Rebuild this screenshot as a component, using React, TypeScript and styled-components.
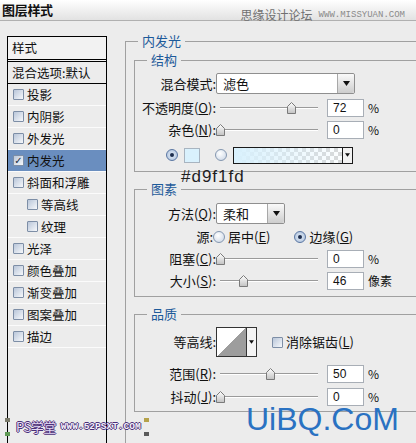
import React from 'react';
import styled, { createGlobalStyle } from 'styled-components';

const GlobalStyle = createGlobalStyle`
  html, body {
    margin: 0;
    padding: 0;
  }
  body {
    background: #ececec;
    font-family: "Noto Sans CJK SC", "Liberation Sans", sans-serif;
    font-size: 13px;
    color: #111;
    overflow: hidden;
  }
`;

const effects = [
  { name: '投影' },
  { name: '内阴影' },
  { name: '外发光' },
  { name: '内发光', checked: true },
  { name: '斜面和浮雕' },
  { name: '等高线', sub: true },
  { name: '纹理', sub: true },
  { name: '光泽' },
  { name: '颜色叠加' },
  { name: '渐变叠加' },
  { name: '图案叠加' },
  { name: '描边' },
];

const Thumb = () => (
  <svg width="9" height="12" viewBox="0 0 9 12">
    <defs>
      <linearGradient id="thumbFill" x1="0" x2="0" y1="0" y2="1">
        <stop offset="0" stopColor="#ffffff" />
        <stop offset="1" stopColor="#c2c2c2" />
      </linearGradient>
    </defs>
    <path
      d="M0.5 4.5 L4.5 0.5 L8.5 4.5 V11.5 H0.5 Z"
      fill="url(#thumbFill)"
      stroke="#7a7a7a"
    />
  </svg>
);

const Arrow = ({ w = 7 }: { w?: number }) => (
  <svg width={w} height={Math.ceil(w / 2) + 1} viewBox="0 0 7 5">
    <path d="M0 0 H7 L3.5 5 Z" fill="#111" />
  </svg>
);

const Slider = ({ pos }: { pos: number }) => (
  <Track>
    <ThumbSpot $pos={pos}>
      <Thumb />
    </ThumbSpot>
  </Track>
);

// label + slider + number box + unit, used inside a Row
const SliderParts = (props: {
  label: React.ReactNode;
  pos: number;
  value: string;
  unit?: string;
}) => (
  <>
    <Label>{props.label}</Label>
    <Slider pos={props.pos} />
    <NumBox>{props.value}</NumBox>
    <Unit>{props.unit ?? '%'}</Unit>
  </>
);

export default function App() {
  return (
    <Dialog>
      <GlobalStyle />
      <TitleBar>
        <Title>图层样式</Title>
        <SiteMark>
          思缘设计论坛<SiteUrl>WWW.MISSYUAN.COM</SiteUrl>
        </SiteMark>
      </TitleBar>

      <Body>
        <StylePanel>
          <PanelHead>样式</PanelHead>
          <BlendRow>混合选项:默认</BlendRow>
          {effects.map((e) => (
            <EffectRow key={e.name} $sub={e.sub} $active={e.checked}>
              <Check>{e.checked ? '✓' : ''}</Check>
              {e.name}
            </EffectRow>
          ))}
        </StylePanel>

        <Outer>
          <Legend $offset={4}>内发光</Legend>

          <Group $pt={5} $pb={5}>
            <Legend $offset={12}>结构</Legend>
            <Row $h={21}>
              <Label>混合模式:</Label>
              <Select $w={139}>
                <span>滤色</span>
                <DropBtn>
                  <Arrow />
                </DropBtn>
              </Select>
            </Row>
            <Row $mt={3}>
              <SliderParts label={<>不透明度(<u>O</u>):</>} pos={72} value="72" />
            </Row>
            <Row>
              <SliderParts label={<>杂色(<u>N</u>):</>} pos={0} value="0" />
            </Row>
            <Row $mt={3}>
              <ColorPick>
                <Radio $on />
                <Swatch />
                <Radio />
                <GradientBox>
                  <GradientDrop>
                    <Arrow w={5} />
                  </GradientDrop>
                </GradientBox>
              </ColorPick>
            </Row>
          </Group>

          <Group $pt={6} $pb={4}>
            <Legend $offset={12}>图素</Legend>
            <Row $h={21}>
              <Label>方法(<u>Q</u>):</Label>
              <Select $w={69}>
                <span>柔和</span>
                <DropBtn>
                  <Arrow />
                </DropBtn>
              </Select>
            </Row>
            <Row $mt={2}>
              <Label $w={78}>源:</Label>
              <Choice>
                <Radio />
                <span>居中(<u>E</u>)</span>
              </Choice>
              <Choice $gap={24}>
                <Radio $on />
                <span>边缘(<u>G</u>)</span>
              </Choice>
            </Row>
            <Row>
              <SliderParts label={<>阻塞(<u>C</u>):</>} pos={0} value="0" />
            </Row>
            <Row>
              <SliderParts label={<>大小(<u>S</u>):</>} pos={23} value="46" unit="像素" />
            </Row>
          </Group>

          <Group $pt={5} $pb={3}>
            <Legend $offset={12}>品质</Legend>
            <Row $h={30}>
              <Label>等高线:</Label>
              <ContourBox />
              <ContourDrop>
                <Arrow w={5} />
              </ContourDrop>
              <Choice $gap={15}>
                <Check>{''}</Check>
                <span>消除锯齿(<u>L</u>)</span>
              </Choice>
            </Row>
            <Row $mt={6}>
              <SliderParts label={<>范围(<u>R</u>):</>} pos={51} value="50" />
            </Row>
            <Row $mt={1}>
              <SliderParts label={<>抖动(<u>J</u>):</>} pos={0} value="0" />
            </Row>
          </Group>
        </Outer>
      </Body>

      <HexNote>#d9f1fd</HexNote>
      <PsMark>
        <Corner />
        <PsName>PS学堂</PsName>
        <PsUrl>WWW.52PSXT.COM</PsUrl>
        <Corner $flip />
      </PsMark>
      <Brand>UiBQ.CoM</Brand>
    </Dialog>
  );
}

const Dialog = styled.div`
  position: relative;
  width: 416px;
  height: 443px;
  overflow: hidden;
`;

const TitleBar = styled.div`
  height: 20px;
  border-bottom: 1px solid #b0b0b0;
  background: linear-gradient(to bottom, #ffffff, #e2e2e2);
  display: flex;
  align-items: flex-end;
  justify-content: space-between;
  padding: 0 11px 0 2px;
`;

const Title = styled.div`
  align-self: center;
  font-weight: 700;
  font-size: 13px;
  line-height: 16px;
  letter-spacing: -0.3px;
`;

const SiteMark = styled.div`
  display: flex;
  align-items: flex-end;
  color: #707070;
  font-size: 12px;
  line-height: 14px;
  margin-bottom: -2px;
`;

const SiteUrl = styled.span`
  font-family: "Liberation Mono", monospace;
  font-size: 9px;
  line-height: 10px;
  margin: 0 0 2px 6px;
  color: #8a8a8a;
`;

const Body = styled.div`
  display: flex;
  padding: 12px 0 0 7px;
  height: 422px;
  box-sizing: border-box;
`;

const StylePanel = styled.div`
  width: 100px;
  flex-shrink: 0;
  box-sizing: border-box;
  margin-top: 3px;
  border: 1px solid #000;
  border-bottom: none;
  background: #ececec;
  font-size: 12.5px;
`;

const PanelHead = styled.div`
  height: 22px;
  line-height: 22px;
  padding-left: 4px;
  border-bottom: 3px double #000;
  background: #f2f2f2;
`;

const BlendRow = styled.div`
  height: 21px;
  line-height: 21px;
  padding-left: 4px;
  border-bottom: 1px solid #000;
  white-space: nowrap;
`;

const EffectRow = styled.div<{ $sub?: boolean; $active?: boolean }>`
  height: 21px;
  display: flex;
  align-items: center;
  gap: 3px;
  padding-left: ${(p) => (p.$sub ? 19 : 5)}px;
  border-bottom: 1px solid #fbfbfb;
  background: ${(p) => (p.$active ? '#6a8ebf' : 'transparent')};
  white-space: nowrap;
`;

const Check = styled.span`
  width: 11px;
  height: 11px;
  box-sizing: border-box;
  flex-shrink: 0;
  border: 1px solid #7d8ea6;
  border-radius: 1px;
  background: linear-gradient(135deg, #b9c6d9, #f6f8fb);
  font-family: "DejaVu Sans", sans-serif;
  font-size: 10px;
  line-height: 9px;
  text-align: center;
  color: #1c2a44;
`;

const Outer = styled.fieldset`
  margin: 0 0 0 18px;
  padding: 3px 0 0 8px;
  border: 1px solid #a0a0a0;
  border-bottom: none;
  width: 330px;
  min-width: 0;
  flex-shrink: 0;
`;

const Legend = styled.legend<{ $offset: number }>`
  margin-left: ${(p) => p.$offset}px;
  padding: 0 4px;
  color: #1d5a9a;
  font-size: 13px;
  line-height: 16px;
`;

const Group = styled.fieldset<{ $pt: number; $pb: number }>`
  margin: 0 0 9px 0;
  padding: ${(p) => p.$pt}px 0 ${(p) => p.$pb}px 0;
  border: 1px solid #a0a0a0;
  width: 320px;
  min-width: 0;
`;

const Row = styled.div<{ $h?: number; $mt?: number }>`
  display: flex;
  align-items: center;
  height: ${(p) => p.$h ?? 22}px;
  margin-top: ${(p) => p.$mt ?? 0}px;
  white-space: nowrap;
`;

const Label = styled.span<{ $w?: number }>`
  width: ${(p) => p.$w ?? 81}px;
  flex-shrink: 0;
  text-align: right;
  line-height: 16px;

  u {
    text-decoration: underline;
  }
`;

const Track = styled.div`
  position: relative;
  width: 98px;
  height: 12px;
  margin-left: 4px;
  flex-shrink: 0;

  &::before {
    content: '';
    position: absolute;
    left: 0;
    right: 0;
    top: 5px;
    height: 1px;
    background: #9a9a9a;
    box-shadow: 0 1px 0 #ffffff;
  }
`;

const ThumbSpot = styled.span<{ $pos: number }>`
  position: absolute;
  top: 0;
  left: calc(${(p) => p.$pos}% - 4px);
  line-height: 0;
`;

const NumBox = styled.div`
  margin-left: 9px;
  width: 37px;
  height: 18px;
  box-sizing: border-box;
  border: 1px solid #a8aeb6;
  background: #fff;
  padding-left: 5px;
  font-family: "Liberation Sans", sans-serif;
  font-size: 12px;
  line-height: 16px;
  flex-shrink: 0;
`;

const Unit = styled.span`
  margin-left: 4px;
  font-size: 12px;
  line-height: 16px;
`;

const Select = styled.div<{ $w: number }>`
  width: ${(p) => p.$w}px;
  height: 21px;
  box-sizing: border-box;
  border: 1px solid #8f8f8f;
  border-radius: 2px;
  background: #fff;
  display: flex;
  align-items: center;
  padding-left: 6px;
  line-height: 16px;
`;

const DropBtn = styled.span`
  margin-left: auto;
  width: 16px;
  height: 100%;
  display: flex;
  align-items: center;
  justify-content: center;
  border-left: 1px solid #a8a8a8;
  border-radius: 0 2px 2px 0;
  background: linear-gradient(to bottom, #fafafa, #cdcdcd);
`;

const ColorPick = styled.div`
  display: flex;
  align-items: center;
  padding-left: 31px;
`;

const Radio = styled.span<{ $on?: boolean }>`
  position: relative;
  width: 12px;
  height: 12px;
  box-sizing: border-box;
  flex-shrink: 0;
  border-radius: 50%;
  border: 1px solid ${(p) => (p.$on ? '#5a77a3' : '#8497b0')};
  background: ${(p) =>
    p.$on
      ? 'radial-gradient(circle, #e6eef8 0, #a7bcd8 100%)'
      : 'radial-gradient(circle at 40% 35%, #ffffff 0, #c8d4e4 100%)'};

  &::after {
    content: '';
    display: ${(p) => (p.$on ? 'block' : 'none')};
    position: absolute;
    left: 3px;
    top: 3px;
    width: 4px;
    height: 4px;
    border-radius: 50%;
    background: #1d2d4d;
  }
`;

const Swatch = styled.span`
  margin-left: 6px;
  width: 16px;
  height: 15px;
  box-sizing: border-box;
  border: 1px solid #a8b4c0;
  background: #d9f1fd;
  flex-shrink: 0;

  & + ${Radio} {
    margin-left: 15px;
  }
`;

const GradientBox = styled.span`
  margin-left: 6px;
  width: 120px;
  height: 17px;
  box-sizing: border-box;
  border: 1px solid #1a1a1a;
  display: flex;
  justify-content: flex-end;
  background: linear-gradient(to right, #d9f1fd 0%, rgba(217, 241, 253, 0) 100%),
    repeating-conic-gradient(#d6d6d6 0 25%, #ffffff 0 50%) 0 0 / 8px 8px;
`;

const GradientDrop = styled.span`
  width: 9px;
  height: 100%;
  border-left: 1px solid #1a1a1a;
  background: #f2f2f2;
  display: flex;
  align-items: center;
  justify-content: center;
`;

const Choice = styled.span<{ $gap?: number }>`
  display: flex;
  align-items: center;
  gap: 3px;
  margin-left: ${(p) => p.$gap ?? 0}px;
  line-height: 16px;

  u {
    text-decoration: underline;
  }
`;

const ContourBox = styled.span`
  width: 31px;
  height: 30px;
  box-sizing: border-box;
  border: 1px solid #333;
  background: linear-gradient(to top left, #9d9d9d 50%, #ffffff 50%);
  flex-shrink: 0;
`;

const ContourDrop = styled.span`
  width: 10px;
  height: 30px;
  box-sizing: border-box;
  border: 1px solid #333;
  border-left: none;
  background: #f4f4f4;
  display: flex;
  align-items: center;
  justify-content: center;
  flex-shrink: 0;
`;

const HexNote = styled.div`
  position: absolute;
  left: 181px;
  top: 168px;
  font-family: "Liberation Sans", sans-serif;
  font-size: 17px;
  line-height: 17px;
  letter-spacing: 1px;
  color: #1f1f1f;
`;

const PsMark = styled.div`
  position: absolute;
  left: 5px;
  top: 418px;
  display: flex;
  align-items: center;
  gap: 3px;
`;

const Corner = styled.span<{ $flip?: boolean }>`
  width: 5px;
  height: 18px;
  box-sizing: border-box;
  border-top: 4px solid ${(p) => (p.$flip ? '#b5a24a' : '#7a7a6a')};
  border-bottom: 4px solid ${(p) => (p.$flip ? '#5a5a5a' : '#5f9a55')};
  margin-right: ${(p) => (p.$flip ? 0 : 3)}px;
`;

const PsName = styled.span`
  font-size: 13px;
  line-height: 16px;
  letter-spacing: -0.5px;
  color: #e4d9f4;
  text-shadow: 1px 0 #4a2f78, -1px 0 #4a2f78, 0 1px #4a2f78, 0 -1px #4a2f78;
`;

const PsUrl = styled.span`
  font-family: "Liberation Mono", monospace;
  font-weight: 700;
  font-size: 9.5px;
  line-height: 12px;
  color: #f4f0fa;
  margin-left: 2px;
  text-shadow: 1px 0 #4a2f78, -1px 0 #4a2f78, 0 1px #4a2f78, 0 -1px #4a2f78;
`;

const Brand = styled.div`
  position: absolute;
  left: 246px;
  top: 407px;
  font-family: "Liberation Sans", sans-serif;
  font-size: 32px;
  line-height: 24px;
  color: #2a72c2;
`;
